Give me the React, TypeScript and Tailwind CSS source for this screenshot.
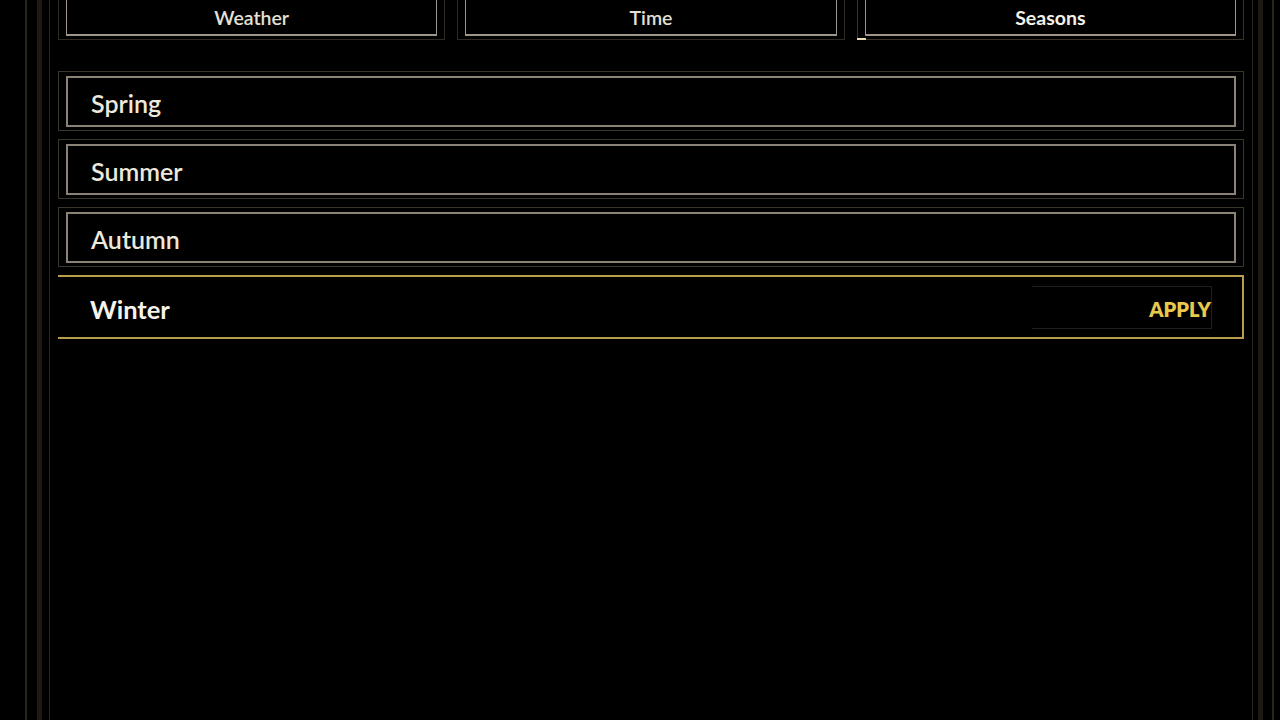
import React from "react";

const tabs = [
  { label: "Weather", active: false },
  { label: "Time", active: false },
  { label: "Seasons", active: true },
];

const seasons = ["Spring", "Summer", "Autumn"];

export default function App() {
  return (
    <div
      className="w-full h-[720px] overflow-hidden bg-black"
      style={{ fontFamily: "Lato, 'Open Sans', sans-serif" }}
    >
      <div className="ml-[25px] mr-[6px] h-full border-x-2 border-[#2a241a] pl-[10px] pr-[9px]">
        <div className="h-full border-x-[5px] border-[#1e1a12] pl-[7px] pr-[5px]">
          <div className="h-full border-x border-[#2c271c] px-[8px]">
            {/* Tabs */}
            <div className="grid grid-cols-3 gap-[12px]">
              {tabs.map((t) => (
                <div
                  key={t.label}
                  className={
                    "relative h-[40px] px-[7px] pb-[3px] border-x border-b " +
                    (t.active ? "border-[#3a3428]" : "border-[#302b22]")
                  }
                >
                  {t.active && (
                    <div className="absolute left-[-1px] bottom-[-1px] w-[9px] h-[2px] bg-[#e8dcb0]" />
                  )}
                  <div className="h-full border-x border-b-2 border-[#9d9587] flex items-center justify-center pt-[2px]">
                    <span
                      className={
                        "text-[19.5px] leading-none " +
                        (t.active
                          ? "font-bold text-[#f4f1ea]"
                          : "font-semibold text-[#e4e0d6]")
                      }
                    >
                      {t.label}
                    </span>
                  </div>
                </div>
              ))}
            </div>

            {/* Seasons list */}
            <div className="mt-[31px] flex flex-col gap-[8px]">
              {seasons.map((s) => (
                <div
                  key={s}
                  className="h-[60px] border border-[#3b352a] pl-[7px] pr-[7px] pt-[4px] pb-[3px]"
                >
                  <div className="h-full border-2 border-[#8a8274] flex items-center pl-[23px] pt-[4px]">
                    <span className="text-[25px] font-semibold text-[#ece8dc] leading-none">
                      {s}
                    </span>
                  </div>
                </div>
              ))}
              <div className="h-[64px] border-y-2 border-r-2 border-[#b89d4e] flex items-center justify-between pl-[32px] pr-[30px]">
                <span className="text-[25.5px] font-bold text-[#f6f3ec] leading-none pt-[5px]">
                  Winter
                </span>
                <div className="w-[180px] h-[43px] border-y border-r border-[#1e1e1e] flex items-center justify-end pt-[3px]">
                  <span className="text-[20px] font-extrabold text-[#e8c94c] leading-none">
                    APPLY
                  </span>
                </div>
              </div>
            </div>
          </div>
        </div>
      </div>
    </div>
  );
}
